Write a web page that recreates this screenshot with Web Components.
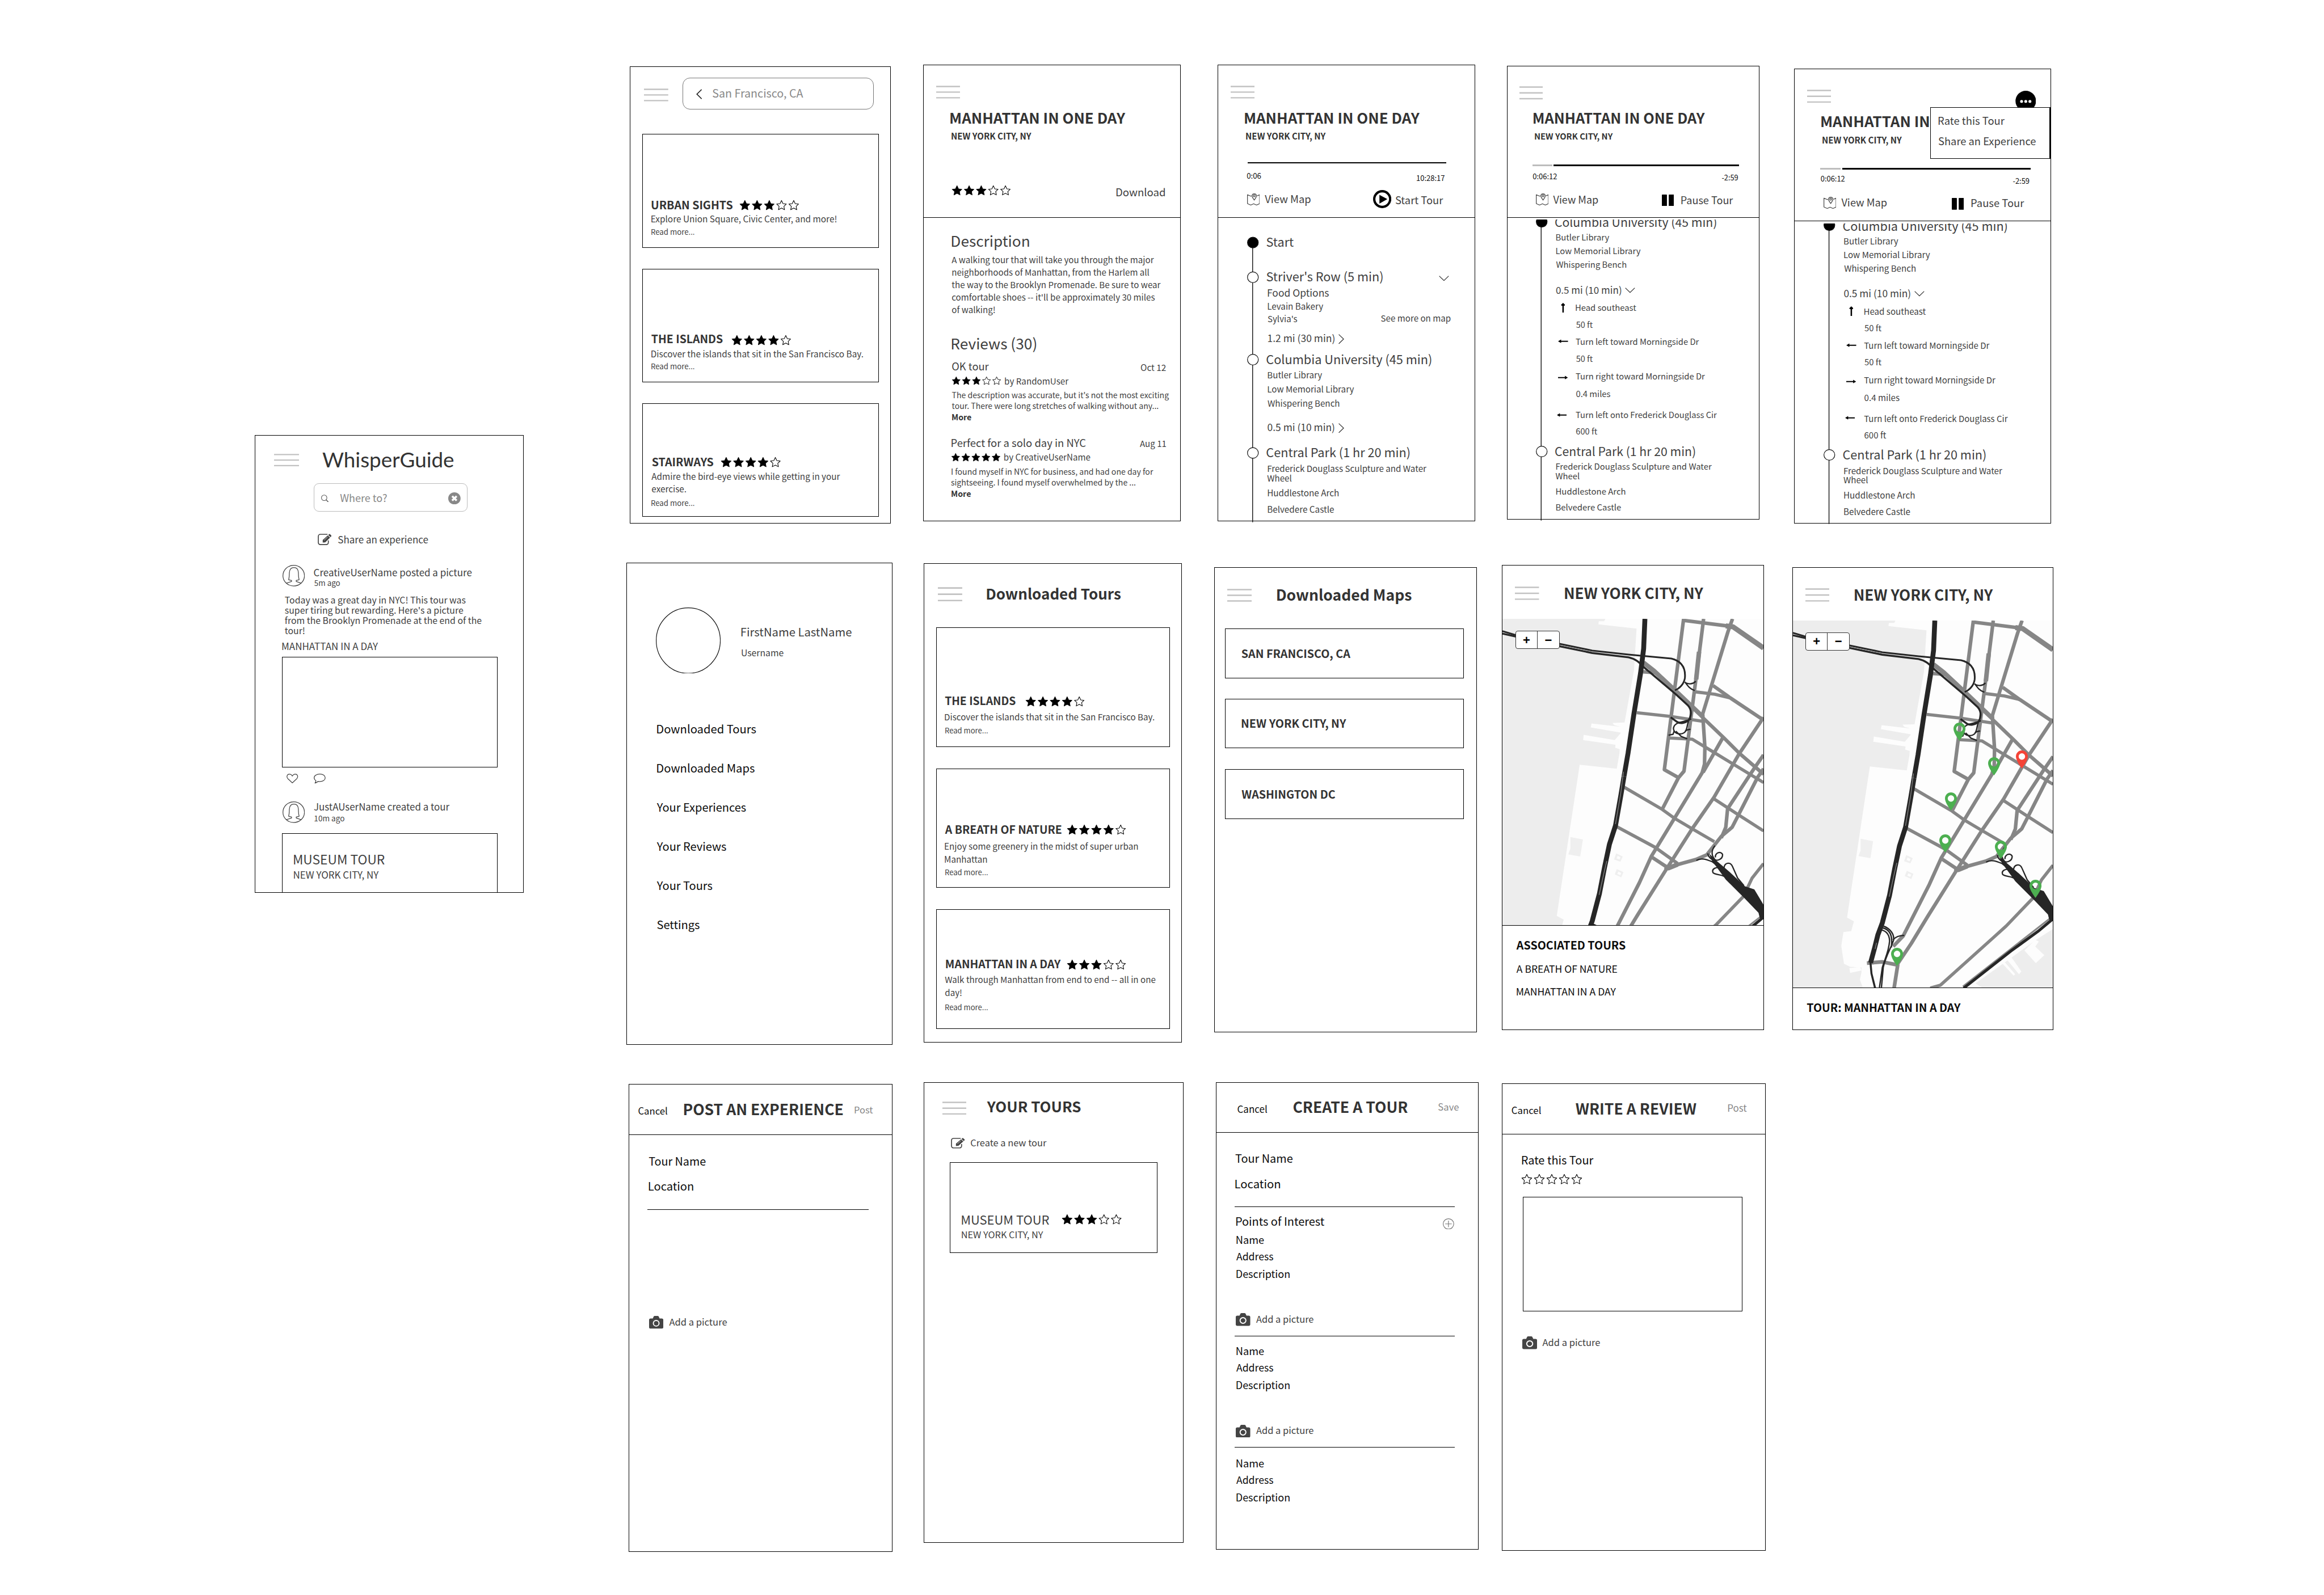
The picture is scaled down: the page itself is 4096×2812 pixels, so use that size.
<!DOCTYPE html>
<html lang="en">
<head>
<meta charset="utf-8">
<title>WhisperGuide wireframes</title>
<style>
html,body{margin:0;padding:0;background:#fff}
body{font-family:"Noto Sans CJK SC","Noto Sans",sans-serif;color:#3d3d3d;overflow:hidden}
</style>
</head>
<body>
<wf-canvas>
<wf-board view="520 900 610 1000" box="47 31 1508.5 1548">
  <wf-row><wf-icon name="burger" box="152 93 288 135"></wf-icon><wf-text hand x="415" w="711" c="112">WhisperGuide</wf-text></wf-row>
  <wf-field box="366 191 1202 285"><wf-row><wf-icon name="search" box="408 227 448 252"></wf-icon><wf-text tone="dim" x="511" w="253" c="239">Where to?</wf-text><wf-icon name="clear" box="1098 220 1165 260"></wf-icon></wf-row></wf-field>
  <wf-row><wf-icon name="edit" box="388 357 463 395"></wf-icon><wf-text x="500" w="488" c="377">Share an experience</wf-text></wf-row>
  <wf-row><wf-icon name="avatar" box="198 461 319 532"></wf-icon><wf-col><wf-text x="369" w="856" c="487">CreativeUserName posted a picture</wf-text><wf-text x="371" w="138" c="521">5m ago</wf-text></wf-col></wf-row>
  <wf-text x="211" w="1067" c="579" lh="34">Today was a great day in NYC! This tour was<br>super tiring but rewarding. Here's a picture<br>from the Brooklyn Promenade at the end of the<br>tour!</wf-text>
  <wf-text x="197" w="519" c="730">MANHATTAN IN A DAY</wf-text>
  <wf-card box="195 766 1365 1132"></wf-card>
  <wf-row><wf-icon name="heart" box="220 1153 283 1185"></wf-icon><wf-icon name="comment" box="367 1153 431 1186"></wf-icon></wf-row>
  <wf-row><wf-icon name="avatar" box="198 1245 319 1316"></wf-icon><wf-col><wf-text x="369" w="736" c="1264">JustAUserName created a tour</wf-text><wf-text x="372" w="161" c="1303">10m ago</wf-text></wf-col></wf-row>
  <wf-card box="195 1351 1365 1547"><wf-text x="260" w="492" c="1440">MUSEUM TOUR</wf-text><wf-text x="260" w="460" c="1488">NEW YORK CITY, NY</wf-text></wf-card>
</wf-board>

<wf-col>
<wf-row>
<wf-board view="1310 120 600 1000" box="54 31 1494 1546">
  <wf-row><wf-icon name="burger" box="133 106 267 149"></wf-icon><wf-field dark box="345 70 1402 174"><wf-row><wf-icon name="left" box="420 107 452 141"></wf-icon><wf-text tone="dim" x="512" w="499" c="122">San Francisco, CA</wf-text></wf-row></wf-field></wf-row>
  <wf-card box="122 256 1428 633"><wf-row><wf-text b x="175" w="446" c="491">URBAN SIGHTS</wf-text><wf-stars n="3" x="663" w="325" c="492"></wf-stars></wf-row><wf-text x="174" w="1021" c="539">Explore Union Square, Civic Center, and more!</wf-text><wf-text x="174" w="236" c="581">Read more...</wf-text></wf-card>
  <wf-card box="122 702 1428 1079"><wf-row><wf-text b x="174" w="392" c="936">THE ISLANDS</wf-text><wf-stars n="4" x="617" w="325" c="938"></wf-stars></wf-row><wf-text x="174" w="1168" c="985">Discover the islands that sit in the San Francisco Bay.</wf-text><wf-text x="174" w="236" c="1027">Read more...</wf-text></wf-card>
  <wf-card box="122 1148 1428 1525"><wf-row><wf-text b x="178" w="337" c="1343">STAIRWAYS</wf-text><wf-stars n="4" x="558" w="327" c="1344"></wf-stars></wf-row><wf-text x="174" w="1042" c="1392" lh="41">Admire the bird-eye views while getting in your<br>exercise.</wf-text><wf-text x="174" w="236" c="1480">Read more...</wf-text></wf-card>
</wf-board>

<wf-board view="1930 120 600 1000" box="54 26 1477 1540">
  <wf-icon name="burger" box="125 96 257 139"></wf-icon>
  <wf-text b x="205" w="965" c="203">MANHATTAN IN ONE DAY</wf-text>
  <wf-text b x="211" w="440" c="264">NEW YORK CITY, NY</wf-text>
  <wf-row><wf-stars n="3" x="212" w="322" c="443"></wf-stars><wf-text x="1121" w="267" c="449">Download</wf-text></wf-row>
  <wf-rule box="55 532 1476 532"></wf-rule>
  <wf-text x="213" w="425" c="611">Description</wf-text>
  <wf-text x="212" w="1154" c="675" lh="41">A walking tour that will take you through the major<br>neighborhoods of Manhattan, from the Harlem all<br>the way to the Brooklyn Promenade. Be sure to wear<br>comfortable shoes -- it'll be approximately 30 miles<br>of walking!</wf-text>
  <wf-text x="213" w="464" c="952">Reviews (30)</wf-text>
  <wf-row><wf-text x="214" w="202" c="1027">OK tour</wf-text><wf-text x="1256" w="137" c="1030">Oct 12</wf-text></wf-row>
  <wf-row><wf-stars n="3" x="213" w="269" c="1074"></wf-stars><wf-text x="506" w="350" c="1076">by RandomUser</wf-text></wf-row>
  <wf-text x="213" w="1197" c="1123" lh="36.5">The description was accurate, but it's not the most exciting<br>tour. There were long stretches of walking without any...</wf-text>
  <wf-text b x="214" w="105" c="1196">More</wf-text>
  <wf-row><wf-text x="211" w="740" c="1280">Perfect for a solo day in NYC</wf-text><wf-text x="1250" w="144" c="1283">Aug 11</wf-text></wf-row>
  <wf-row><wf-stars n="5" x="209" w="269" c="1327"></wf-stars><wf-text x="502" w="474" c="1328">by CreativeUserName</wf-text></wf-row>
  <wf-text x="211" w="1114" c="1376" lh="36.5">I found myself in NYC for business, and had one day for<br>sightseeing. I found myself overwhelmed by the ...</wf-text>
  <wf-text b x="211" w="105" c="1449">More</wf-text>
</wf-board>

<wf-board view="2550 120 600 1000" box="60 27 1481 1540">
  <wf-icon name="burger" box="131 96 263 139"></wf-icon>
  <wf-text b x="210" w="965" c="203">MANHATTAN IN ONE DAY</wf-text>
  <wf-text b x="217" w="439" c="264">NEW YORK CITY, NY</wf-text>
  <wf-rule t="2" box="225 350.5 1322 350.5"></wf-rule>
  <wf-row><wf-text tone="ink" x="221" w="77" c="395">0:06</wf-text><wf-text tone="ink" x="1159" w="153" c="402">10:28:17</wf-text></wf-row>
  <wf-row><wf-icon name="map" box="221 451 292 493"></wf-icon><wf-text x="320" w="252" c="472">View Map</wf-text><wf-icon name="play" box="916 442 1017 502"></wf-icon><wf-text x="1042" w="262" c="475">Start Tour</wf-text></wf-row>
  <wf-rule box="61 532.5 1480 532.5"></wf-rule>
  <wf-row>
    <wf-rail box="223 595 287 1542" axis="253.5" dots="615 730 1003 1312"></wf-rail>
    <wf-col>
      <wf-text x="330" w="149" c="614">Start</wf-text>
      <wf-row><wf-text x="330" w="640" c="730">Striver's Row (5 min)</wf-text><wf-icon name="down" box="1282 725 1338 743"></wf-icon></wf-row>
      <wf-text x="337" w="336" c="783">Food Options</wf-text>
      <wf-text x="337" w="305" c="828">Levain Bakery</wf-text>
      <wf-row><wf-text x="337" w="161" c="869">Sylvia's</wf-text><wf-text x="962" w="383" c="867">See more on map</wf-text></wf-row>
      <wf-row><wf-text x="338" w="366" c="934">1.2 mi (30 min)</wf-text><wf-icon name="right" box="727 920 758 953"></wf-icon></wf-row>
      <wf-text x="330" w="909" c="1003">Columbia University (45 min)</wf-text>
      <wf-text x="337" w="299" c="1056">Butler Library</wf-text>
      <wf-text x="337" w="475" c="1103">Low Memorial Library</wf-text>
      <wf-text x="336" w="395" c="1149">Whispering Bench</wf-text>
      <wf-row><wf-text x="336" w="367" c="1228">0.5 mi (10 min)</wf-text><wf-icon name="right" box="727 1214 758 1247"></wf-icon></wf-row>
      <wf-text x="330" w="789" c="1312">Central Park (1 hr 20 min)</wf-text>
      <wf-text x="337" w="876" c="1365" lh="31">Frederick Douglass Sculpture and Water<br>Wheel</wf-text>
      <wf-text x="337" w="390" c="1447">Huddlestone Arch</wf-text>
      <wf-text x="337" w="364" c="1501">Belvedere Castle</wf-text>
    </wf-col>
  </wf-row>
</wf-board>

<wf-board view="3160 120 600 1000" box="63 29 1456 1534">
  <wf-icon name="burger" box="132 98 261 142"></wf-icon>
  <wf-text b x="210" w="946" c="205">MANHATTAN IN ONE DAY</wf-text>
  <wf-text b x="217" w="430" c="266">NEW YORK CITY, NY</wf-text>
  <wf-row><wf-rule t="3" grey box="203 360.5 314 360.5"></wf-rule><wf-rule t="3" box="321 360.5 1345 360.5"></wf-rule></wf-row>
  <wf-row><wf-text tone="ink" x="206" w="132" c="396">0:06:12</wf-text><wf-text tone="ink" x="1250" w="88" c="402">-2:59</wf-text></wf-row>
  <wf-row><wf-icon name="map" box="221 451 292 493"></wf-icon><wf-text x="318" w="247" c="473">View Map</wf-text><wf-icon name="pause" box="918 456 985 495"></wf-icon><wf-text x="1026" w="285" c="475">Pause Tour</wf-text></wf-row>
  <wf-rule box="64 532.5 1455 532.5"></wf-rule>
  <wf-scroll box="64 540 1454 1538">
    <wf-row>
    <wf-rail box="223 528 287 1537" axis="252" dots="547 1308"></wf-rail>
    <wf-col>
      <wf-text x="329" w="889" c="549">Columbia University (45 min)</wf-text>
      <wf-text x="335" w="292" c="600">Butler Library</wf-text>
      <wf-text x="335" w="465" c="645">Low Memorial Library</wf-text>
      <wf-text x="335" w="386" c="691">Whispering Bench</wf-text>
      <wf-row><wf-text x="334" w="359" c="773">0.5 mi (10 min)</wf-text><wf-icon name="down" box="714 765 770 783"></wf-icon></wf-row>
      <wf-row><wf-icon name="aup" box="359 815 383 848"></wf-icon><wf-text x="443" w="333" c="833">Head southeast</wf-text></wf-row>
      <wf-text x="445" w="91" c="889">50 ft</wf-text>
      <wf-row><wf-icon name="aleft" box="345 937 400 951"></wf-icon><wf-text x="443" w="680" c="946">Turn left toward Morningside Dr</wf-text></wf-row>
      <wf-text x="445" w="91" c="1002">50 ft</wf-text>
      <wf-row><wf-icon name="aright" box="343 1057 398 1071"></wf-icon><wf-text x="443" w="713" c="1061">Turn right toward Morningside Dr</wf-text></wf-row>
      <wf-text x="445" w="188" c="1118">0.4 miles</wf-text>
      <wf-row><wf-icon name="aleft" box="338 1180 392 1194"></wf-icon><wf-text x="443" w="779" c="1188">Turn left onto Frederick Douglass Cir</wf-text></wf-row>
      <wf-text x="445" w="116" c="1242">600 ft</wf-text>
      <wf-text x="329" w="772" c="1308">Central Park (1 hr 20 min)</wf-text>
      <wf-text x="335" w="858" c="1360" lh="31">Frederick Douglass Sculpture and Water<br>Wheel</wf-text>
      <wf-text x="335" w="381" c="1442">Huddlestone Arch</wf-text>
      <wf-text x="335" w="357" c="1496">Belvedere Castle</wf-text>
    </wf-col>
    </wf-row>
  </wf-scroll>
</wf-board>

<wf-board view="3770 120 600 1000" box="55 40 1472 1547">
  <wf-row><wf-icon name="burger" box="125 109 258 153"></wf-icon><wf-icon name="more" box="1274 113 1389 181"></wf-icon></wf-row>
  <wf-text b x="205" w="593" c="215">MANHATTAN IN</wf-text>
  <wf-text b x="211" w="438" c="277">NEW YORK CITY, NY</wf-text>
  <wf-row><wf-rule t="3" grey box="198 371.5 311 371.5"></wf-rule><wf-rule t="3" box="319 371.5 1359 371.5"></wf-rule></wf-row>
  <wf-row><wf-text tone="ink" x="202" w="131" c="407">0:06:12</wf-text><wf-text tone="ink" x="1263" w="89" c="413">-2:59</wf-text></wf-row>
  <wf-row><wf-icon name="map" box="216 463 287 505"></wf-icon><wf-text x="315" w="250" c="484">View Map</wf-text><wf-icon name="pause" box="925 468 992 507"></wf-icon><wf-text x="1034" w="290" c="486">Pause Tour</wf-text></wf-row>
  <wf-rule box="56 544.5 1471 544.5"></wf-rule>
  <wf-scroll box="56 552 1470 1550">
    <wf-row>
    <wf-rail box="218 540 282 1549" axis="248" dots="559 1320"></wf-rail>
    <wf-col>
      <wf-text x="325" w="904" c="561">Columbia University (45 min)</wf-text>
      <wf-text x="331" w="298" c="612">Butler Library</wf-text>
      <wf-text x="331" w="473" c="657">Low Memorial Library</wf-text>
      <wf-text x="331" w="393" c="702">Whispering Bench</wf-text>
      <wf-row><wf-text x="330" w="365" c="784">0.5 mi (10 min)</wf-text><wf-icon name="down" box="719 777 775 795"></wf-icon></wf-row>
      <wf-row><wf-icon name="aup" box="356 827 380 860"></wf-icon><wf-text x="442" w="339" c="845">Head southeast</wf-text></wf-row>
      <wf-text x="443" w="93" c="901">50 ft</wf-text>
      <wf-row><wf-icon name="aleft" box="343 949 398 963"></wf-icon><wf-text x="441" w="692" c="958">Turn left toward Morningside Dr</wf-text></wf-row>
      <wf-text x="443" w="93" c="1014">50 ft</wf-text>
      <wf-row><wf-icon name="aright" box="341 1069 396 1083"></wf-icon><wf-text x="441" w="725" c="1073">Turn right toward Morningside Dr</wf-text></wf-row>
      <wf-text x="443" w="192" c="1130">0.4 miles</wf-text>
      <wf-row><wf-icon name="aleft" box="336 1191 390 1205"></wf-icon><wf-text x="441" w="793" c="1200">Turn left onto Frederick Douglass Cir</wf-text></wf-row>
      <wf-text x="443" w="119" c="1254">600 ft</wf-text>
      <wf-text x="325" w="786" c="1320">Central Park (1 hr 20 min)</wf-text>
      <wf-text x="331" w="873" c="1372" lh="31">Frederick Douglass Sculpture and Water<br>Wheel</wf-text>
      <wf-text x="331" w="388" c="1454">Huddlestone Arch</wf-text>
      <wf-text x="331" w="363" c="1508">Belvedere Castle</wf-text>
    </wf-col>
    </wf-row>
  </wf-scroll>
  <wf-menu over box="805 167 1470 339"><wf-text x="852" w="364" c="212">Rate this Tour</wf-text><wf-text x="852" w="536" c="280">Share an Experience</wf-text></wf-menu>
</wf-board>
</wf-row>

<wf-row>
<wf-board view="1300 1170 1240 1060" box="29.5 28 740 1536">
  <wf-row><wf-icon name="ring" box="109 168 282 375"></wf-icon><wf-col><wf-text x="337" w="294" c="247">FirstName LastName</wf-text><wf-text x="338" w="111" c="311">Username</wf-text></wf-col></wf-row>
  <wf-text tone="ink" x="112" w="264" c="550">Downloaded Tours</wf-text>
  <wf-text tone="ink" x="112" w="260" c="672">Downloaded Maps</wf-text>
  <wf-text tone="ink" x="111" w="238" c="795">Your Experiences</wf-text>
  <wf-text tone="ink" x="111" w="185" c="917">Your Reviews</wf-text>
  <wf-text tone="ink" x="111" w="148" c="1039">Your Tours</wf-text>
  <wf-text tone="ink" x="112" w="113" c="1161">Settings</wf-text>
</wf-board>

<wf-board view="1300 1170 1240 1060" box="824 31 1513.5 1528">
  <wf-row><wf-icon name="burger" box="862 104 927 149"></wf-icon><wf-text b x="993" w="357" c="127">Downloaded Tours</wf-text></wf-row>
  <wf-card box="857 231 1482 604"><wf-row><wf-text b x="881" w="188" c="463">THE ISLANDS</wf-text><wf-stars n="4" x="1097" w="156" c="462"></wf-stars></wf-row><wf-text x="881" w="559" c="511">Discover the islands that sit in the San Francisco Bay.</wf-text><wf-text x="882" w="113" c="553">Read more...</wf-text></wf-card>
  <wf-card box="857 672 1482 1044"><wf-row><wf-text b x="881" w="311" c="863">A BREATH OF NATURE</wf-text><wf-stars n="4" x="1207" w="156" c="862"></wf-stars></wf-row><wf-text x="881" w="515" c="916" lh="41">Enjoy some greenery in the midst of super urban<br>Manhattan</wf-text><wf-text x="882" w="113" c="997">Read more...</wf-text></wf-card>
  <wf-card box="857 1112 1482 1486"><wf-row><wf-text b x="884" w="306" c="1284">MANHATTAN IN A DAY</wf-text><wf-stars n="3" x="1207" w="156" c="1285"></wf-stars></wf-row><wf-text x="881" w="562" c="1332" lh="41">Walk through Manhattan from end to end -- all in one<br>day!</wf-text><wf-text x="882" w="113" c="1419">Read more...</wf-text></wf-card>
</wf-board>

<wf-board view="2550 1180 600 600" box="40 48 1492 2619">
  <wf-row><wf-icon name="burger" box="112 168 248 240"></wf-icon><wf-text b x="388" w="741" c="204">Downloaded Maps</wf-text></wf-row>
  <wf-card box="101 388 1419 662"><wf-text b x="192" w="600" c="527">SAN FRANCISCO, CA</wf-text></wf-card>
  <wf-card box="101 775 1419 1049"><wf-text b x="193" w="576" c="914">NEW YORK CITY, NY</wf-text></wf-card>
  <wf-card box="101 1165 1419 1440"><wf-text b x="192" w="516" c="1305">WASHINGTON DC</wf-text></wf-card>
</wf-board>

<wf-board view="3160 1180 600 1020" box="34 22 1481 1533">
  <wf-row><wf-icon name="burger" box="107 91 240 135"></wf-icon><wf-text b x="383" w="764" c="114">NEW YORK CITY, NY</wf-text></wf-row>
  <wf-map span="995" box="37 197 1479 1192"><wf-zoom over box="108 236 353 294"></wf-zoom></wf-map>
  <wf-rule box="36 1193 1480 1193"></wf-rule>
  <wf-text b tone="ink" x="115" w="601" c="1257">ASSOCIATED TOURS</wf-text>
  <wf-text tone="ink" x="115" w="555" c="1334">A BREATH OF NATURE</wf-text>
  <wf-text tone="ink" x="117" w="547" c="1409">MANHATTAN IN A DAY</wf-text>
</wf-board>

<wf-board view="3770 1180 600 1020" box="43 29 1484 1532">
  <wf-row><wf-icon name="burger" box="115 97 249 141"></wf-icon><wf-text b x="389" w="763" c="120">NEW YORK CITY, NY</wf-text></wf-row>
  <wf-map span="1191" box="46 203 1482 1394"><wf-zoom over box="116 241 360 299"></wf-zoom>
    <wf-pin over box="933 533 999 592"></wf-pin><wf-pin over box="1125 647 1191 706"></wf-pin><wf-pin over color="#f44336" box="1279 625 1345 684"></wf-pin><wf-pin over box="887 760 953 819"></wf-pin><wf-pin over box="857 896 923 955"></wf-pin><wf-pin over box="1164 917 1230 976"></wf-pin><wf-pin over box="1355 1044 1421 1103"></wf-pin><wf-pin over box="588 1265 654 1324"></wf-pin>
  </wf-map>
  <wf-rule box="44 1395 1483 1395"></wf-rule>
  <wf-text b tone="ink" x="125" w="848" c="1461">TOUR: MANHATTAN IN A DAY</wf-text>
</wf-board>
</wf-row>

<wf-row>
<wf-board view="1300 2270 1240 560" box="35 58 741 2829">
  <wf-row><wf-text tone="ink" x="62" w="77" c="221">Cancel</wf-text><wf-text b x="184" w="424" c="211">POST AN EXPERIENCE</wf-text><wf-text tone="dim" x="640" w="48" c="213">Post</wf-text></wf-row>
  <wf-rule box="36 359.5 740 359.5"></wf-rule>
  <wf-text tone="ink" x="90" w="151" c="517">Tour Name</wf-text>
  <wf-text tone="ink" x="90" w="118" c="667">Location</wf-text>
  <wf-rule box="86 801 677 801"></wf-rule>
  <wf-row><wf-icon name="camera" box="90 1432 128 1507"></wf-icon><wf-text x="144" w="154" c="1469">Add a picture</wf-text></wf-row>
</wf-board>

<wf-board view="1300 2270 1240 560" box="824 48 1518 2773">
  <wf-row><wf-icon name="burger" box="874 162 938 241"></wf-icon><wf-text b x="993" w="250" c="194">YOUR TOURS</wf-text></wf-row>
  <wf-row><wf-icon name="edit" box="897 378 934 441"></wf-icon><wf-text x="950" w="202" c="408">Create a new tour</wf-text></wf-row>
  <wf-card box="894 522 1449 1057"><wf-row><wf-text x="926" w="233" c="864">MUSEUM TOUR</wf-text><wf-stars n="3" x="1194" w="158" c="860"></wf-stars></wf-row><wf-text x="926" w="217" c="950">NEW YORK CITY, NY</wf-text></wf-card>
</wf-board>

<wf-board view="2550 2270 1200 940" box="24 29 750 1676">
  <wf-row><wf-text tone="ink" x="85" w="81" c="123">Cancel</wf-text><wf-text b x="239" w="315" c="118">CREATE A TOUR</wf-text><wf-text tone="dim" x="639" w="56" c="118">Save</wf-text></wf-row>
  <wf-rule box="25 206 749 206"></wf-rule>
  <wf-text tone="ink" x="79" w="157" c="299">Tour Name</wf-text>
  <wf-text tone="ink" x="79" w="123" c="388">Location</wf-text>
  <wf-rule box="76 467.5 684 467.5"></wf-rule>
  <wf-row><wf-text tone="ink" x="81" w="243" c="521">Points of Interest</wf-text><wf-icon name="plus" box="652 508 683 547"></wf-icon></wf-row>
  <wf-text tone="ink" x="82" w="75" c="584">Name</wf-text>
  <wf-text tone="ink" x="81" w="102" c="644">Address</wf-text>
  <wf-text tone="ink" x="82" w="146" c="704">Description</wf-text>
  <wf-row><wf-icon name="camera" box="80 843 120 888"></wf-icon><wf-text x="136" w="158" c="864">Add a picture</wf-text></wf-row>
  <wf-rule box="76 922.5 684 922.5"></wf-rule>
  <wf-text tone="ink" x="82" w="75" c="977">Name</wf-text>
  <wf-text tone="ink" x="81" w="102" c="1037">Address</wf-text>
  <wf-text tone="ink" x="82" w="146" c="1097">Description</wf-text>
  <wf-row><wf-icon name="camera" box="80 1236 120 1281"></wf-icon><wf-text x="136" w="158" c="1257">Add a picture</wf-text></wf-row>
  <wf-rule box="76 1315.5 684 1315.5"></wf-rule>
  <wf-text tone="ink" x="82" w="75" c="1373">Name</wf-text>
  <wf-text tone="ink" x="81" w="102" c="1433">Address</wf-text>
  <wf-text tone="ink" x="82" w="146" c="1493">Description</wf-text>
</wf-board>

<wf-board view="2550 2270 1200 940" box="814 33 1542 1680">
  <wf-row><wf-text tone="ink" x="842" w="80" c="129">Cancel</wf-text><wf-text b x="1018" w="333" c="124">WRITE A REVIEW</wf-text><wf-text tone="dim" x="1439" w="51" c="122">Post</wf-text></wf-row>
  <wf-rule box="815 212.5 1541 212.5"></wf-rule>
  <wf-text tone="ink" x="870" w="197" c="305">Rate this Tour</wf-text>
  <wf-stars n="0" x="869" w="166" c="371"></wf-stars>
  <wf-card box="872 432 1479 836"></wf-card>
  <wf-row><wf-icon name="camera" box="870 925 911 970"></wf-icon><wf-text x="926" w="159" c="946">Add a picture</wf-text></wf-row>
</wf-board>
</wf-row>
</wf-col>
</wf-canvas>

<script>
// Design units are 4910 wide; the page is 4096. Each board has its own 1568-step grid over its view.
const SCALE = 4096 / 4910, GRID = 1568;
const num = (el, a) => parseFloat(el.getAttribute(a));
const gridOf = el => {
  const [x, y, w, h] = el.closest('[view]').getAttribute('view').split(' ').map(Number);
  return { X: v => (x + v * w / GRID) * SCALE, Y: v => (y + v * h / GRID) * SCALE };
};
const pen = document.createElement('canvas').getContext('2d');

class WfItem extends HTMLElement {
  constructor() {
    super();
    this.attachShadow({ mode: 'open' }).innerHTML =
      `<style>:host{display:flex;flex-direction:${this.axis};align-items:flex-start;flex:none;box-sizing:border-box;position:relative;width:var(--w);height:var(--h)}:host([over]){position:absolute}${this.css}</style>${this.inner}`;
  }
  get axis() { return 'column'; }
  get css() { return ''; }
  get inner() { return '<slot></slot>'; }
  get edge() { return 0; }
  rect() {
    if (this.hasAttribute('box')) {
      const g = gridOf(this), [l, t, r, b] = this.getAttribute('box').split(' ').map(Number);
      return { l: g.X(l), t: g.Y(t), r: g.X(r), b: g.Y(b) };
    }
    const k = [...this.children].filter(c => !c.hasAttribute('over')).map(c => c.rect());
    return { l: Math.min(...k.map(q => q.l)), t: Math.min(...k.map(q => q.t)), r: Math.max(...k.map(q => q.r)), b: Math.max(...k.map(q => q.b)) };
  }
  // Turn the children's rects into sizes and the margins between them.
  arrange() {
    const me = this.rect(), x0 = me.l + this.edge, y0 = me.t + this.edge;
    let cx = x0, cy = y0;
    for (const c of this.children) {
      if (!(c instanceof WfItem)) continue;
      const q = c.rect();
      c.style.setProperty('--w', (q.r - q.l).toFixed(2) + 'px');
      c.style.setProperty('--h', (q.b - q.t).toFixed(2) + 'px');
      if (c.hasAttribute('over')) {
        c.style.left = (q.l - x0).toFixed(2) + 'px';
        c.style.top = (q.t - y0).toFixed(2) + 'px';
      } else {
        c.style.marginLeft = (q.l - (this.axis === 'row' ? cx : x0)).toFixed(2) + 'px';
        c.style.marginTop = (q.t - (this.axis === 'row' ? y0 : cy)).toFixed(2) + 'px';
        cx = q.r; cy = q.b;
      }
      c.arrange();
    }
  }
}
class WfRow extends WfItem { get axis() { return 'row'; } }
class WfCol extends WfItem {}
class WfBoard extends WfItem {
  get edge() { return 1; }
  get css() { return ':host{border:1px solid #000;background:#fff}'; }
}
class WfCard extends WfItem {
  get edge() { return 1; }
  get css() { return ':host{border:1px solid #000}'; }
}
class WfMenu extends WfItem {
  get edge() { return 1; }
  get css() { return ':host{border:1px solid #000;border-right-width:2px;background:#fff}'; }
}
class WfField extends WfItem {
  get edge() { return 1; }
  get css() { return ':host{border:1px solid #bbb;border-radius:9px}:host([dark]){border-color:#777;border-radius:13px}'; }
}
class WfScroll extends WfItem { get css() { return ':host{overflow:hidden}'; } }

class WfText extends WfItem {
  get css() {
    return `:host{display:block;white-space:nowrap;height:var(--h);font-size:var(--fs);line-height:var(--lp);color:#3f3f3f}
      :host([b]){font-weight:700;color:#333}:host([tone=dim]){color:#888}:host([tone=ink]){color:#0c0c0c}
      :host([hand]){font-family:Lato,"Noto Sans",sans-serif;color:#333}
      span{display:block;margin-top:-.05em}:host([hand]) span{margin-top:-.01em}`;
  }
  get inner() { return '<span><slot></slot></span>'; }
  rect() {
    if (this.q) return this.q;
    const g = gridOf(this), x = num(this, 'x'), w = num(this, 'w'), c = g.Y(num(this, 'c'));
    pen.font = `${this.hasAttribute('b') ? 700 : 400} 200px ${this.hasAttribute('hand') ? 'Lato' : '"Noto Sans CJK SC"'}`;
    const lines = this.innerHTML.split('<br>').map(s => pen.measureText(s.replace(/&amp;/g, '&').trim()));
    const ink = m => m.actualBoundingBoxRight + m.actualBoundingBoxLeft;
    const m = lines.reduce((a, b) => ink(b) > ink(a) ? b : a);
    const l = g.X(x), r = g.X(x + w), fs = (r - l) / ink(m) * 200;
    const lp = this.hasAttribute('lh') ? g.Y(num(this, 'lh')) - g.Y(0) : fs;
    this.style.setProperty('--fs', fs.toFixed(3) + 'px');
    this.style.setProperty('--lp', lp.toFixed(3) + 'px');
    const left = l + m.actualBoundingBoxLeft * fs / 200;
    return this.q = { l: left, t: c - lp / 2, r: left + m.width * fs / 200, b: c - lp / 2 + lp * lines.length };
  }
  arrange() {}
}

const STAR = 'M10.75.5L13.95 7.300 21.200 8.200 15.900 13.200 17.300 20.500 10.750 16.900 4.200 20.500 5.600 13.200.300 8.200 7.550 7.300z';
class WfStars extends WfItem {
  get css() { return 'svg{width:100%;height:100%;display:block;overflow:visible}'; }
  get inner() {
    const n = num(this, 'n');
    return `<svg viewBox="0 0 126.7 21" preserveAspectRatio="none">${[0, 1, 2, 3, 4].map(i =>
      `<path transform="translate(${i * 26.3} 0)" d="${STAR}" fill="${i < n ? '#000' : '#fff'}" stroke="#000" stroke-width="1.300" stroke-linejoin="round"/>`).join('')}</svg>`;
  }
  rect() {
    const g = gridOf(this), l = g.X(num(this, 'x')), r = g.X(num(this, 'x') + num(this, 'w')), c = g.Y(num(this, 'c')), h = (r - l) * 21 / 126.7;
    return { l, r, t: c - h / 2, b: c + h / 2 };
  }
}

class WfRule extends WfItem {
  get css() { return ':host{background:#000}:host([grey]){background:#bdbdbd}'; }
  rect() {
    const g = gridOf(this), [l, y, r] = this.getAttribute('box').split(' ').map(Number), t = num(this, 't') || 1, top = Math.round(g.Y(y) - t / 2);
    return { l: g.X(l), r: g.X(r), t: top, b: top + t };
  }
}

const ICONS = {
  burger: ['0 0 52 27', '<path d="M0 1.7h52M0 13.5h52M0 25.300h52" fill="none" stroke="#c2c2c2" stroke-width="2.8"/>'],
  search: ['0 0 16 16', '<g fill="none" stroke="#555" stroke-width="1.3"><circle cx="6.600" cy="6.800" r="5.900"/><path d="M10.800 11.200L15.600 15.600" stroke-width="1.800"/></g>'],
  clear: ['0 0 26 26', '<circle cx="13" cy="13" r="13" fill="#888"/><path d="M8.300 8.300l9.400 9.400M17.700 8.300l-9.400 9.400" stroke="#fff" stroke-width="4.200"/>'],
  left: ['0 0 12 22', '<path d="M11.300 1L1.500 11l9.800 10" fill="none" stroke="#222" stroke-width="2"/>'],
  right: ['0 0 12 21', '<path d="M.7.7l10.300 9.800L.7 20.300" fill="none" stroke="#333" stroke-width="1.500"/>'],
  down: ['0 0 22 12', '<path d="M.8.8L11 10.800 21.200.8" fill="none" stroke="#333" stroke-width="1.500"/>'],
  edit: ['0 0 29 24', '<path d="M20.500 1.200H5.500a4.300 4.300 0 0 0-4.300 4.300v13a4.300 4.300 0 0 0 4.300 4.300H18a4.300 4.300 0 0 0 4.300-4.300V14" fill="none" stroke="#444" stroke-width="2"/><path d="M10.500 18.500v-5.300L21 3.500l5 4.600-10.300 9.900zM22 2.600l1.800-1.700a1.500 1.500 0 0 1 2 0l2.700 2.600a1.300 1.300 0 0 1 0 1.900L26.900 7.200z" fill="#444"/><path d="M13.500 13.500l7.200-6.800" stroke="#fff" stroke-width=".9"/>'],
  avatar: ['0 0 47 45', '<g fill="none" stroke="#444" stroke-width="1.500" stroke-linejoin="round"><ellipse cx="23.500" cy="22.500" rx="22.700" ry="21.700"/><path d="M7.500 38.500l11.500-3.800v-2.200L12.800 31c1.500-5 1.200-8 1.600-15 .5-7 3.600-10.500 9.600-10.500S33 9 33.400 16c.3 7 0 10 1.600 15l-6.200 1.500v2.200l11 3.800"/></g>'],
  heart: ['0 0 25 20', '<path d="M12.500 19L3 10.500C-.5 7 .8 1.500 5.500 1c3.500-.3 5.800 1.500 7 4 1.200-2.500 3.500-4.300 7-4 4.700.5 6 6 2.500 9.500z" fill="none" stroke="#444" stroke-width="1.500" stroke-linejoin="round"/>'],
  comment: ['0 0 25 21', '<path d="M13 .8c6.600 0 11.300 3.500 11.300 7.900s-4.700 7.900-11.300 7.900c-1.300 0-2.600-.2-3.800-.4-1.800 1.900-4 3-6.600 3.700 1.400-1.400 2-3 1.900-5.200C2.200 13.200.8 11.200.8 8.700.8 4.300 6.400.8 13 .8z" fill="none" stroke="#444" stroke-width="1.500" stroke-linejoin="round"/>'],
  map: ['0 0 28 27', '<g fill="none" stroke="#444" stroke-width="1.500" stroke-linejoin="round"><path d="M9.500 6.500L8 7 .8 4v19l7.200 3 6.200-2.800L20.500 26l6.700-3V4l-5.500 2.500"/><path d="M15.500 15.500c-2.500-4-4.800-6.200-4.800-9.200a4.900 4.900 0 0 1 9.700 0c0 3-2.300 5.200-4.900 9.200z"/><circle cx="15.500" cy="6.200" r="2"/></g>'],
  play: ['0 0 39 38', '<ellipse cx="19.500" cy="19" rx="17" ry="16.500" fill="#fff" stroke="#000" stroke-width="5"/><path d="M13.500 10v18.500L30.500 19z"/>'],
  pause: ['0 0 25.600 25', '<rect width="10.700" height="25" rx="1"/><rect x="14.600" width="11" height="25" rx="1"/>'],
  more: ['0 0 44 43.400', '<circle cx="22" cy="21.700" r="21.700"/><g fill="#fff"><circle cx="13.200" cy="22.500" r="3.100"/><circle cx="22" cy="22.500" r="3.100"/><circle cx="30.800" cy="22.500" r="3.100"/></g>'],
  ring: ['0 0 137 140', '<ellipse cx="68.500" cy="70" rx="67.800" ry="69.300" fill="none" stroke="#111" stroke-width="1.400"/>'],
  camera: ['0 0 30 27', '<path d="M3.200 5.300h4.600l1.800-3.800A2.500 2.500 0 0 1 11.800 0h6.400a2.500 2.500 0 0 1 2.200 1.500l1.800 3.800h4.600A3.200 3.200 0 0 1 30 8.500v15.300a3.200 3.200 0 0 1-3.200 3.200H3.200A3.200 3.200 0 0 1 0 23.800V8.500a3.200 3.200 0 0 1 3.200-3.200z" fill="#444"/><circle cx="15" cy="15.600" r="6" fill="none" stroke="#fff" stroke-width="2.300"/>'],
  plus: ['0 0 24 24', '<g fill="none" stroke="#777" stroke-width="1.400"><circle cx="12" cy="12" r="11.300"/><path d="M12 5v14M5 12h14"/></g>'],
  aup: ['0 0 9 21', '<path d="M4.600 2v19" stroke="#000" stroke-width="3"/><path d="M.3 4.300L4.600 0 8.900 4.300 7.500 6h-6z"/>'],
  aleft: ['0 0 21 9', '<path d="M3 4.500h18" stroke="#000" stroke-width="2.400"/><path d="M0 4.500L6.500.7v7.600z"/>'],
  aright: ['0 0 21 9', '<path d="M0 4.500h18" stroke="#000" stroke-width="2.400"/><path d="M21 4.500L14.500.7v7.600z"/>']
};
class WfIcon extends WfItem {
  get css() { return 'svg{width:100%;height:100%;display:block}'; }
  get inner() {
    const [vb, body] = ICONS[this.getAttribute('name')];
    return `<svg viewBox="${vb}" preserveAspectRatio="none">${body}</svg>`;
  }
}

class WfRail extends WfItem {
  get css() { return 'svg{width:100%;height:100%;display:block;overflow:visible}'; }
  get inner() {
    const [l, t, r, b] = this.getAttribute('box').split(' ').map(Number), mid = (l + r) / 2, x = this.getAttribute('axis');
    const dots = this.getAttribute('dots').split(' ').map(Number);
    return `<svg viewBox="${l} ${t} ${r - l} ${b - t}" preserveAspectRatio="none"><g stroke="#111" stroke-width="1.200">
      <path d="M${x} ${dots[0]}V${b}" vector-effect="non-scaling-stroke" stroke-width="1.400"/>
      ${dots.map((d, i) => `<ellipse cx="${mid}" cy="${d}" rx="30" ry="17.700" fill="${i ? '#fff' : '#000'}" vector-effect="non-scaling-stroke"/>`).join('')}</g></svg>`;
  }
}

class WfPin extends WfItem {
  get css() { return 'svg{width:100%;height:100%;display:block}'; }
  get inner() {
    return `<svg viewBox="0 0 25 38" preserveAspectRatio="none"><path fill-rule="evenodd" fill="${this.getAttribute('color') || '#4caf50'}" d="M12.500 0C5.500 0 0 5.500 0 12.800 0 22 12.500 38 12.500 38S25 22 25 12.800C25 5.500 19.500 0 12.500 0zm0 6a6.500 6.500 0 0 1 0 13.500 6.500 6.500 0 0 1 0-13.500z"/></svg>`;
  }
}

class WfZoom extends WfItem {
  get axis() { return 'row'; }
  get css() { return ':host{background:#fff;border:1px solid #333;border-radius:4px;align-items:stretch}span{flex:1;display:flex;align-items:center;justify-content:center;font-family:"Liberation Sans",sans-serif;font-weight:700;font-size:22px;line-height:25px;color:#000}span+span{border-left:1px solid #333}'; }
  get inner() { return '<span>+</span><span>−</span>'; }
}

class WfMap extends WfItem {
  get css() { return ':host{overflow:hidden;display:block}svg{width:100%;height:100%;display:block}path,polygon{vector-effect:non-scaling-stroke}'; }
  get inner() {
    return `<svg viewBox="46 203 1437 ${this.getAttribute('span')}" preserveAspectRatio="none">
    <rect x="46" y="203" width="1437" height="1192" fill="#fdfdfd"/>
    <g fill="#ededed">
      <polygon points="46,203 612,203 606,211 576,211 574,221 784,235 770,370 718,540 652,541 660,548 697,554 697,575 690,640 675,690 471,677 345,1168 383,1180 368,1212 325,1215 313,1260 328,1318 362,1328 425,1330 425,1345 416,1370 432,1395 46,1395"/>
      <polygon points="1483,1205 1390,1240 1055,1382 1090,1395 1483,1395"/>
    </g>
    <g fill="#fdfdfd">
      <polygon points="536,543 700,554 700,573 532,556"/><polygon points="493,580 664,597 700,572 700,628 666,622 668,612 490,597"/>
      <polygon points="1385,1240 1405,1246 1385,1262 1435,1290 1388,1316 1325,1275"/><polygon points="1222,1300 1245,1290 1308,1343 1295,1352"/><polygon points="1195,1312 1206,1306 1274,1352 1266,1357"/>
      <polygon points="358,1332 418,1328 425,1340 362,1348"/>
    </g>
    <g fill="#efefef"><polygon points="420,912 489,920 474,975 408,968 420,950"/><polygon points="672,965 708,975 695,992 660,985"/><polygon points="675,1016 712,1026 700,1043 664,1033"/></g>
    <g fill="#fdfdfd"><polygon points="680,973 696,978 690,985 674,981"/><polygon points="684,1024 700,1029 694,1036 678,1032"/></g>
    <g fill="none" stroke="#868686" stroke-width="6.300" stroke-linejoin="round">
      <path d="M1043 203L937 693L1015 719"/><path d="M1153 203L1128 320L1045 698L1015 719L925 822"/><path stroke-width="8" d="M1128 310L1112 400"/>
      <path d="M1042 208L1310 228"/><path stroke-width="9" d="M1275 226L1315 229L1483 298"/>
      <path d="M1312 203L1287 245L1148 512L1160 620L1158 675L1145 703L865 975L800 1060L655 1228L600 1262"/>
      <path stroke-width="8" d="M822 345L880 372L1000 438L1150 522"/><path d="M1150 525L1265 590L1350 640L1483 708"/>
      <path d="M820 375L885 378"/><path stroke-width="5.600" d="M785 508L970 520L1150 536"/><path stroke-width="5.600" d="M960 590L1090 594L1210 637L1483 735"/>
      <path stroke-width="5.600" d="M1105 440L1215 448L1300 460"/><path d="M1205 420L1300 460L1475 529"/>
      <path d="M1483 523L1350 640L1210 783L1090 885L955 1010L790 1165L700 1252L625 1318"/>
      <path d="M1260 588L1150 702"/>
      <path d="M1483 645L1430 690L1285 820L1275 880L1250 915"/>
      <path d="M1483 690L1450 718L1345 840L1310 880L1250 910L1170 970L1110 985L1000 1003"/><path stroke-width="8" d="M1010 1001L960 1013L940 1008"/><path d="M960 1013L862 975"/>
      <path stroke-width="5.600" d="M710 748L925 822L990 850L1090 885L1212 927"/><path stroke-width="5.600" d="M1205 786L1345 840L1483 892"/><path stroke-width="5.800" d="M674 878L885 945L1010 998"/>
      <path stroke-width="5.600" d="M1483 998L1420 1045L1372 1105L1225 1195L1150 1235L860 1388L805 1397"/>
      <path stroke-width="6.500" d="M455 1316L540 1312L625 1322L605 1397"/><path stroke-width="3" d="M1483 1163L985 1392"/>
    </g>
    <g fill="none" stroke="#262626" stroke-linejoin="round">
      <path stroke-width="8.600" d="M830 203L823 300L806 380L770 510L737 640L715 715"/>
      <path stroke-width="8.600" d="M715 715L698 775L668 875L635 935L608 1010L580 1095L540 1185L515 1225L498 1265L475 1315"/>
      <path stroke="#858585" stroke-width="1.300" d="M712 700L697 770L668 870M620 990L604 1030L578 1100M508 1250L500 1270"/>
      <path stroke-width="3.500" d="M473 1305L480 1350L500 1397"/>
      <path stroke-width="3" d="M46 243L120 256L360 284L540 306L740 319L975 332C1030 340 1055 362 1050 395C1045 415 1020 430 995 435"/>
      <path stroke-width="3.400" d="M46 251L360 292L540 314L740 328C780 333 800 345 820 358L1000 448L1068 485C1090 500 1085 520 1070 533C1050 543 1020 545 1000 535L972 523"/>
      <path stroke="#858585" stroke-width=".8" d="M360 288L540 310"/>
      <path stroke-width="2.400" d="M1050 410C1070 417 1095 415 1110 406M1050 408C1065 420 1075 430 1104 436M1085 528C1050 540 990 535 987 560C990 580 1040 582 1055 567C1065 560 1075 565 1080 561M1070 535C1060 550 1065 560 1050 570M1000 568L1030 585L1063 593M960 581L985 578L992 565"/>
      <path stroke-width="2.300" d="M1113 988C1140 978 1170 985 1200 992L1260 1020M1175 965C1180 980 1200 985 1215 990M1215 940C1190 960 1200 975 1215 985C1225 990 1260 985 1257 968C1245 955 1215 965 1218 978M1265 1015C1265 995 1300 990 1312 1008L1340 1045L1375 1070M1255 1012C1220 1008 1195 1015 1205 1028C1225 1038 1255 1030 1290 1048"/>
      <path stroke-width="5" d="M1483 1172L1400 1213L1250 1277L990 1397"/>
      <path stroke-width="2.400" d="M530 1193C570 1198 605 1215 603 1240C590 1265 560 1290 545 1330L535 1395M520 1208C555 1207 580 1220 580 1245C575 1280 555 1300 540 1330L524 1395M525 1200C570 1202 592 1218 592 1245L590 1265M598 1240C615 1230 640 1226 661 1226"/>
    </g>
    <polygon fill="#262626" points="1182,965 1230,992 1295,1025 1380,1072 1432,1082 1483,1132 1483,1180 1462,1175 1455,1158 1380,1112 1275,1050 1200,990"/>
    </svg><slot></slot>`;
  }
}

class WfCanvas extends WfItem {
  get axis() { return 'row'; }
  get css() { return ':host{width:4096px;height:2812px;overflow:hidden;background:#fff}'; }
  rect() { return { l: 0, t: 0, r: 4096, b: 2812 }; }
  connectedCallback() { this.arrange(); }
}

const parts = { row: WfRow, col: WfCol, board: WfBoard, card: WfCard, menu: WfMenu, field: WfField, scroll: WfScroll, text: WfText, stars: WfStars, rule: WfRule, icon: WfIcon, rail: WfRail, pin: WfPin, zoom: WfZoom, map: WfMap, canvas: WfCanvas };
for (const [k, c] of Object.entries(parts)) customElements.define('wf-' + k, c);
</script>
</body>
</html>
